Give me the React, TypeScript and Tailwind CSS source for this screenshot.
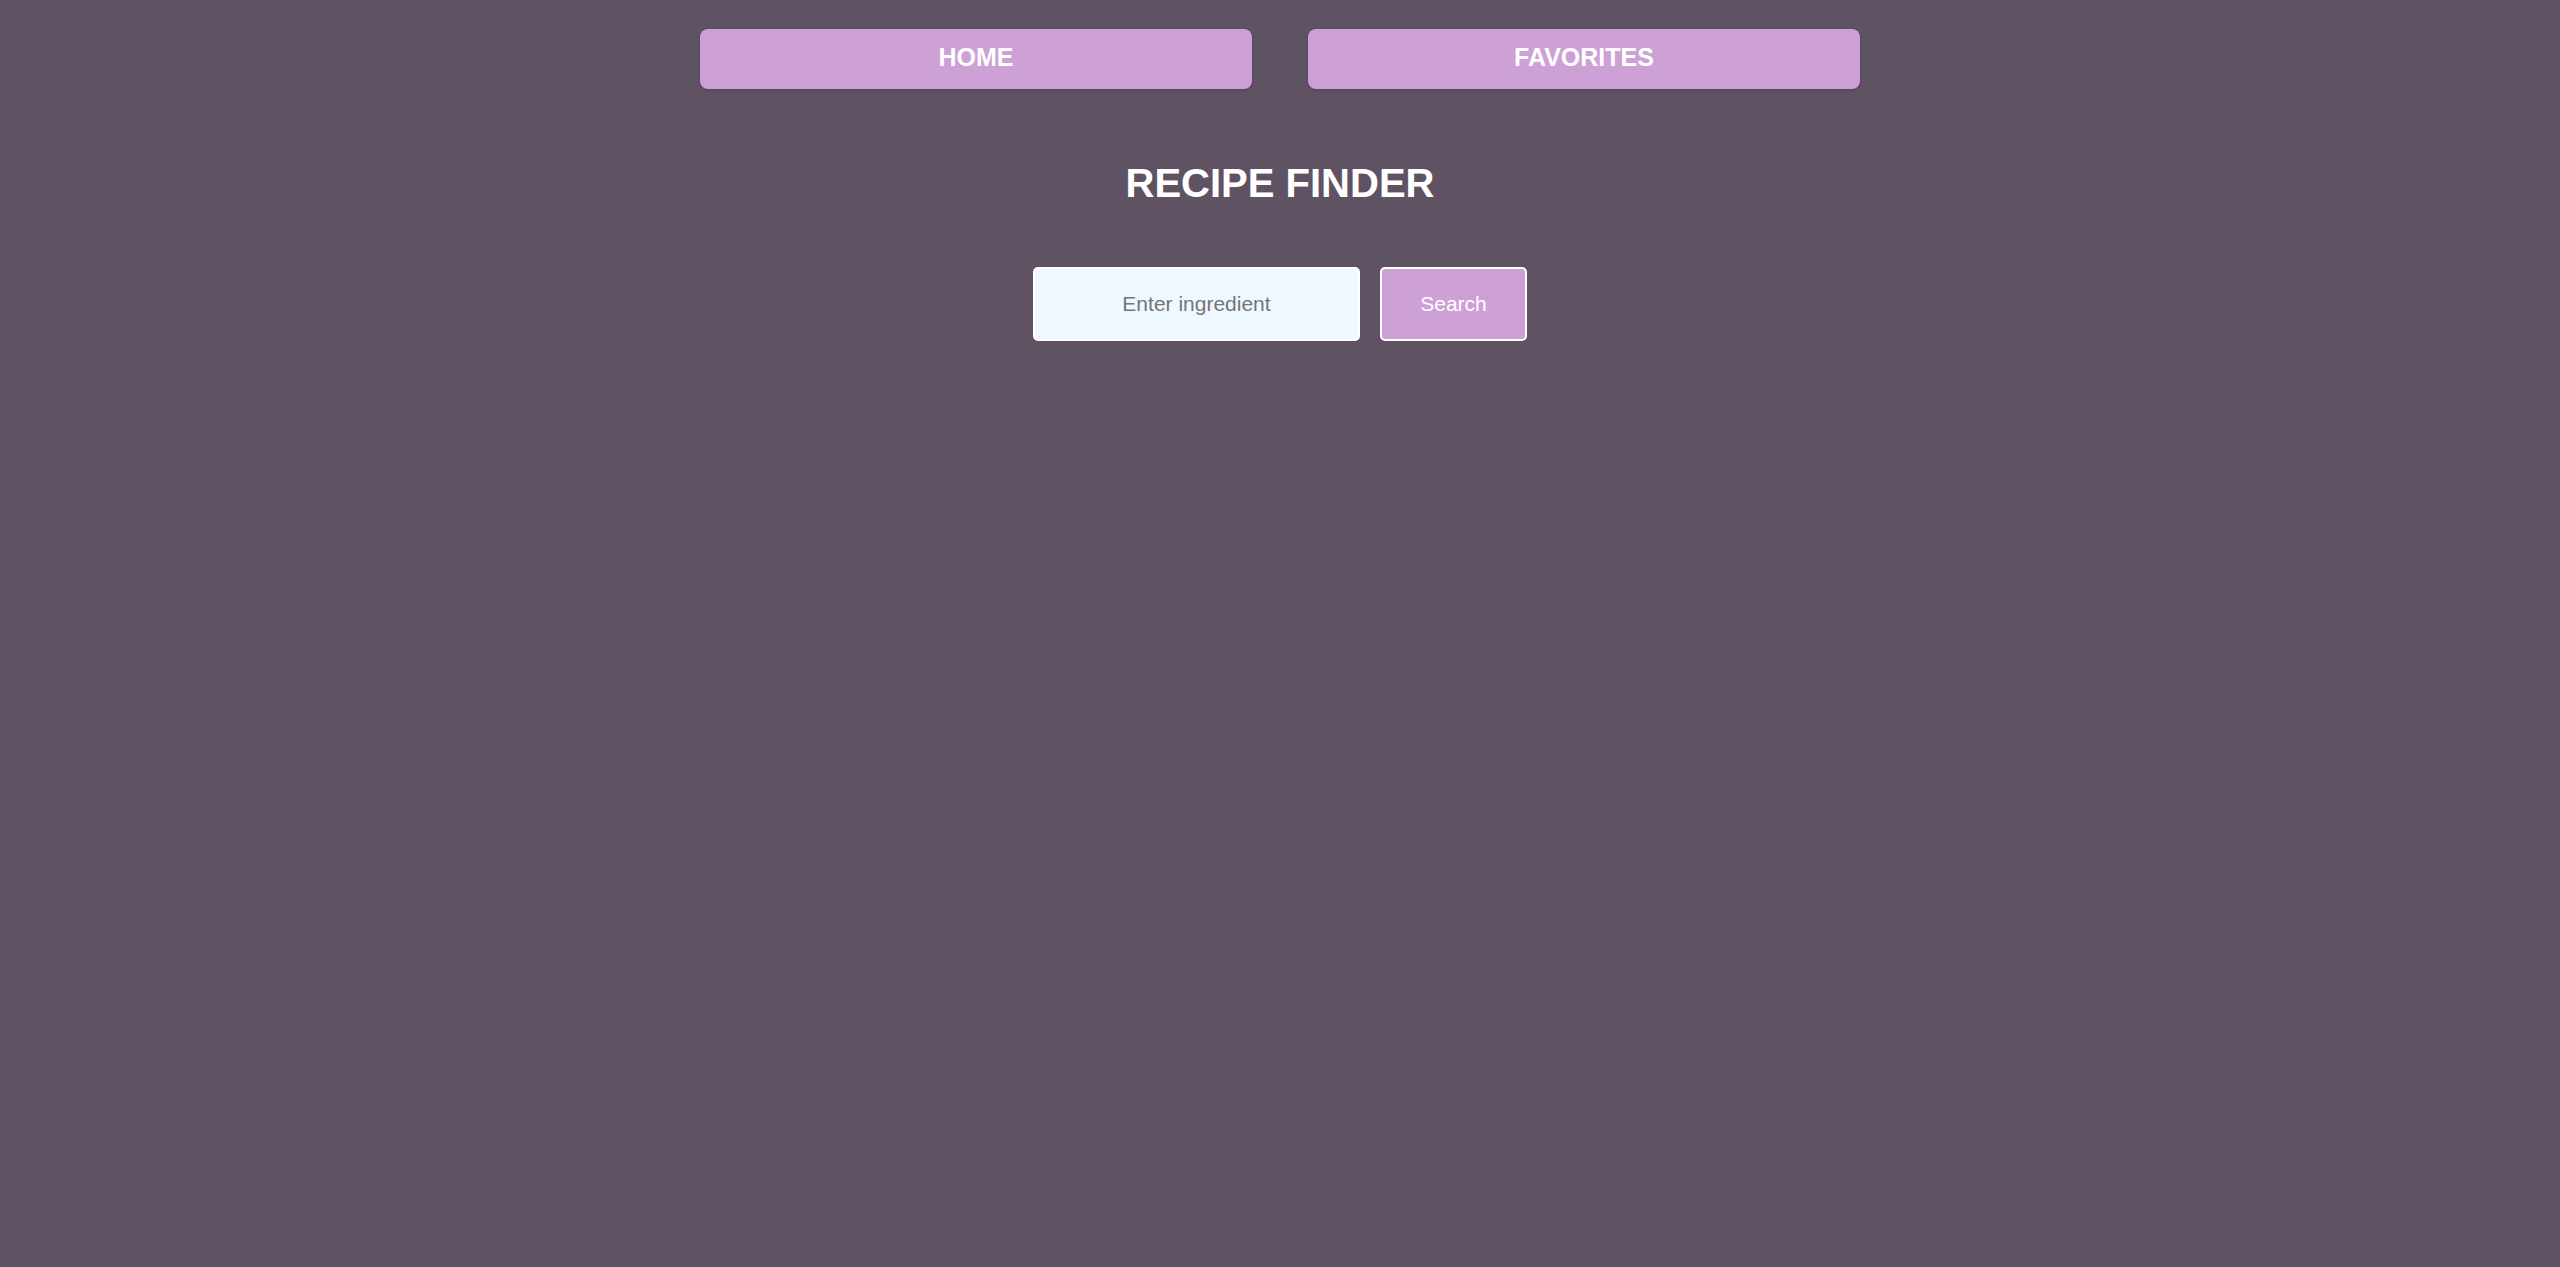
export default function App() {
  return (
    <div
      className="min-h-screen bg-[#5e5263] flex flex-col items-center"
      style={{ fontFamily: '"Liberation Sans", Arial, sans-serif' }}
    >
      {/* Nav */}
      <nav className="flex justify-center gap-[56px] pt-[29px]">
        <button className="w-[552px] h-[60px] pb-[3px] rounded-lg bg-[#cda0d6] text-white text-[25px] font-bold shadow-[0_1px_3px_rgba(0,0,0,0.15)]">
          HOME
        </button>
        <button className="w-[552px] h-[60px] pb-[3px] rounded-lg bg-[#cda0d6] text-white text-[25px] font-bold shadow-[0_1px_3px_rgba(0,0,0,0.15)]">
          FAVORITES
        </button>
      </nav>

      {/* Title */}
      <h1 className="mt-[71px] text-[40px] leading-[46px] font-bold text-white">RECIPE FINDER</h1>

      {/* Search */}
      <div className="mt-[61px] flex gap-[20px]">
        <input
          type="text"
          placeholder="Enter ingredient"
          className="w-[327px] h-[74px] rounded-[5px] border-2 border-white bg-[#f0f8ff] text-center text-[21px] text-gray-700 placeholder:text-[#757575] outline-none"
        />
        <button className="w-[147px] h-[74px] rounded-[5px] border-2 border-white bg-[#cda0d6] text-white text-[21px]">
          Search
        </button>
      </div>
    </div>
  );
}
